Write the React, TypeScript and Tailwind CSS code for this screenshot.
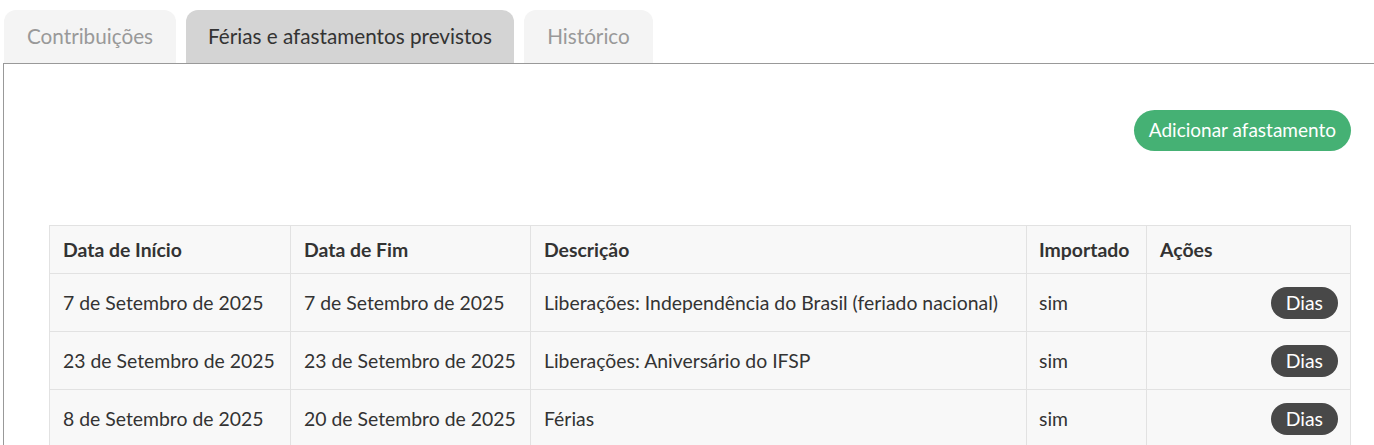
import React from 'react'

const tabs = [
  { label: 'Contribuições', w: 'w-[172px]' },
  { label: 'Férias e afastamentos previstos', w: 'w-[328px]' },
  { label: 'Histórico', w: 'w-[129px]' },
]

const rows = [
  { inicio: '7 de Setembro de 2025', fim: '7 de Setembro de 2025', desc: 'Liberações: Independência do Brasil (feriado nacional)', imp: 'sim' },
  { inicio: '23 de Setembro de 2025', fim: '23 de Setembro de 2025', desc: 'Liberações: Aniversário do IFSP', imp: 'sim' },
  { inicio: '8 de Setembro de 2025', fim: '20 de Setembro de 2025', desc: 'Férias', imp: 'sim' },
]

export default function App() {
  const active = 1
  return (
    <div className="w-[1374px] h-[445px] overflow-hidden bg-white font-['Lato','Open_Sans',sans-serif]">
      {/* tabs */}
      <div className="flex gap-[10px] pl-[4px] pt-[10px]">
        {tabs.map((t, i) => (
          <div
            key={t.label}
            className={
              t.w +
              (i === active
                ? ' h-[53px] flex items-center justify-center rounded-t-[12px] bg-[#d4d4d4] text-[20.7px] text-[#333]'
                : ' h-[53px] flex items-center justify-center rounded-t-[12px] bg-[#f4f4f4] text-[20.7px] text-[#999]')
            }
          >
            {t.label}
          </div>
        ))}
      </div>
      {/* panel */}
      <div className="ml-[3px] border border-[#999] border-r-0 h-[400px] pl-[45px] pr-[23px]">
        <div className="flex justify-end pt-[46px]">
          <button className="h-[41px] px-[15px] rounded-full bg-[#45b174] text-white text-[19px]">
            Adicionar afastamento
          </button>
        </div>
        <table className="mt-[74px] w-full border-collapse text-[19.4px] text-[#333]">
          <thead>
            <tr className="h-[48px] bg-[#f8f8f8]">
              <th className="w-[241px] border border-[#e2e2e2] px-[13px] text-left font-bold">Data de Início</th>
              <th className="w-[240px] border border-[#e2e2e2] px-[13px] text-left font-bold">Data de Fim</th>
              <th className="w-[496px] border border-[#e2e2e2] px-[13px] text-left font-bold">Descrição</th>
              <th className="w-[120px] border border-[#e2e2e2] px-[12px] text-left font-bold">Importado</th>
              <th className="border border-[#e2e2e2] px-[13px] text-left font-bold">Ações</th>
            </tr>
          </thead>
          <tbody>
            {rows.map((r, i) => (
              <tr key={i} className="h-[58px] bg-[#f8f8f8]">
                <td className="border border-[#e2e2e2] px-[13px]">{r.inicio}</td>
                <td className="border border-[#e2e2e2] px-[13px]">{r.fim}</td>
                <td className="border border-[#e2e2e2] px-[13px]">{r.desc}</td>
                <td className="border border-[#e2e2e2] px-[12px]">{r.imp}</td>
                <td className="border border-[#e2e2e2] px-[12px] text-right">
                  <button className="h-[32px] px-[15px] rounded-full bg-[#484848] text-white text-[19.4px]">Dias</button>
                </td>
              </tr>
            ))}
          </tbody>
        </table>
      </div>
    </div>
  )
}
